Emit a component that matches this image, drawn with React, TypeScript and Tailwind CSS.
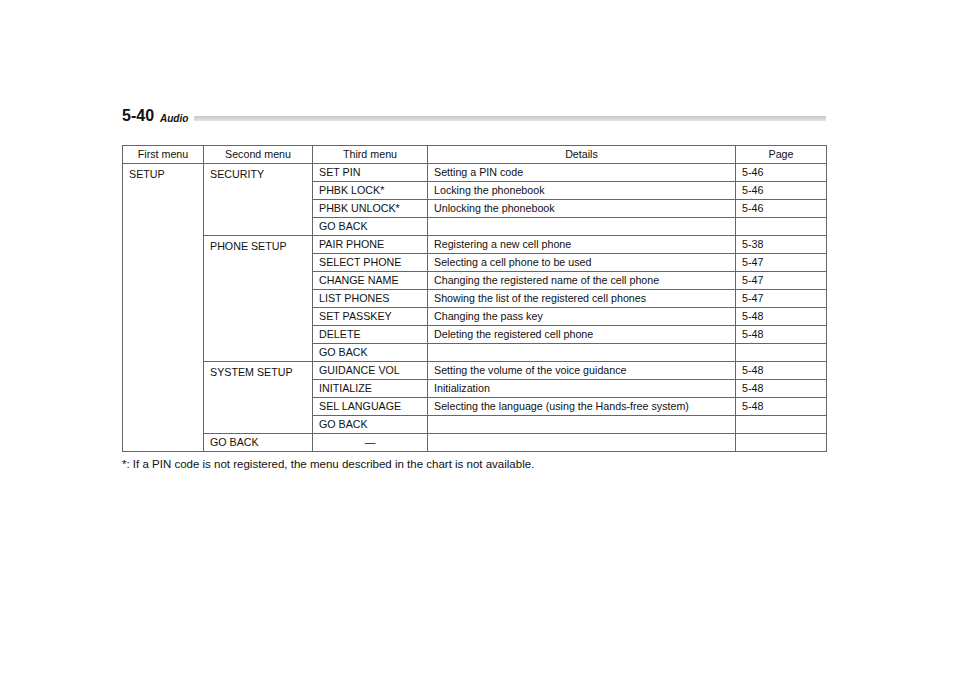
import React from "react";

const groups: { second: string; rows: [string, string, string][] }[] = [
  { second: "SECURITY", rows: [["SET PIN", "Setting a PIN code", "5-46"], ["PHBK LOCK*", "Locking the phonebook", "5-46"], ["PHBK UNLOCK*", "Unlocking the phonebook", "5-46"], ["GO BACK", "", ""]] },
  { second: "PHONE SETUP", rows: [["PAIR PHONE", "Registering a new cell phone", "5-38"], ["SELECT PHONE", "Selecting a cell phone to be used", "5-47"], ["CHANGE NAME", "Changing the registered name of the cell phone", "5-47"], ["LIST PHONES", "Showing the list of the registered cell phones", "5-47"], ["SET PASSKEY", "Changing the pass key", "5-48"], ["DELETE", "Deleting the registered cell phone", "5-48"], ["GO BACK", "", ""]] },
  { second: "SYSTEM SETUP", rows: [["GUIDANCE VOL", "Setting the volume of the voice guidance", "5-48"], ["INITIALIZE", "Initialization", "5-48"], ["SEL LANGUAGE", "Selecting the language (using the Hands-free system)", "5-48"], ["GO BACK", "", ""]] },
];

const c = "border border-[#666] px-[6px] h-[18px] align-middle leading-none";
const top = "border border-[#666] px-[6px] pt-[5px] align-top leading-none";

export default function App() {
  return (
    <div className="w-[960px] h-[691px] bg-white relative text-[#111]" style={{ fontFamily: '"Liberation Sans", Arial, sans-serif' }}>
      <div className="absolute left-[122px] top-[108px] w-[704px] flex items-end gap-[6px]">
        <span className="text-[16px] font-bold leading-none">5-40</span>
        <span className="text-[10px] font-bold italic leading-none">Audio</span>
        <div className="flex-1 h-[5px] mb-[3px] bg-gradient-to-b from-[#c8c8c8] to-[#e4e4e4]" />
      </div>
      <div className="absolute left-[122px] top-[145px]">
        <table className="border-collapse border-[1.5px] border-[#333] text-[10.7px]" style={{ tableLayout: "fixed", width: 704 }}>
          <colgroup>
            <col style={{ width: 81 }} /><col style={{ width: 109 }} /><col style={{ width: 115 }} /><col style={{ width: 308 }} /><col style={{ width: 91 }} />
          </colgroup>
          <tbody>
            <tr>
              {["First menu", "Second menu", "Third menu", "Details", "Page"].map((h) => (
                <td key={h} className={c + " text-center"}>{h}</td>
              ))}
            </tr>
            {groups.map((g, gi) =>
              g.rows.map((r, ri) => (
                <tr key={gi + "-" + ri}>
                  {gi === 0 && ri === 0 && <td rowSpan={16} className={top}>SETUP</td>}
                  {ri === 0 && <td rowSpan={g.rows.length} className={top}>{g.second}</td>}
                  <td className={c}>{r[0]}</td>
                  <td className={c}>{r[1]}</td>
                  <td className={c}>{r[2]}</td>
                </tr>
              ))
            )}
            <tr>
              <td className={c}>GO BACK</td>
              <td className={c + " text-center"}>—</td>
              <td className={c}></td>
              <td className={c}></td>
            </tr>
          </tbody>
        </table>
        <div className="text-[11.5px] mt-[7px] leading-none">*: If a PIN code is not registered, the menu described in the chart is not available.</div>
      </div>
    </div>
  );
}
